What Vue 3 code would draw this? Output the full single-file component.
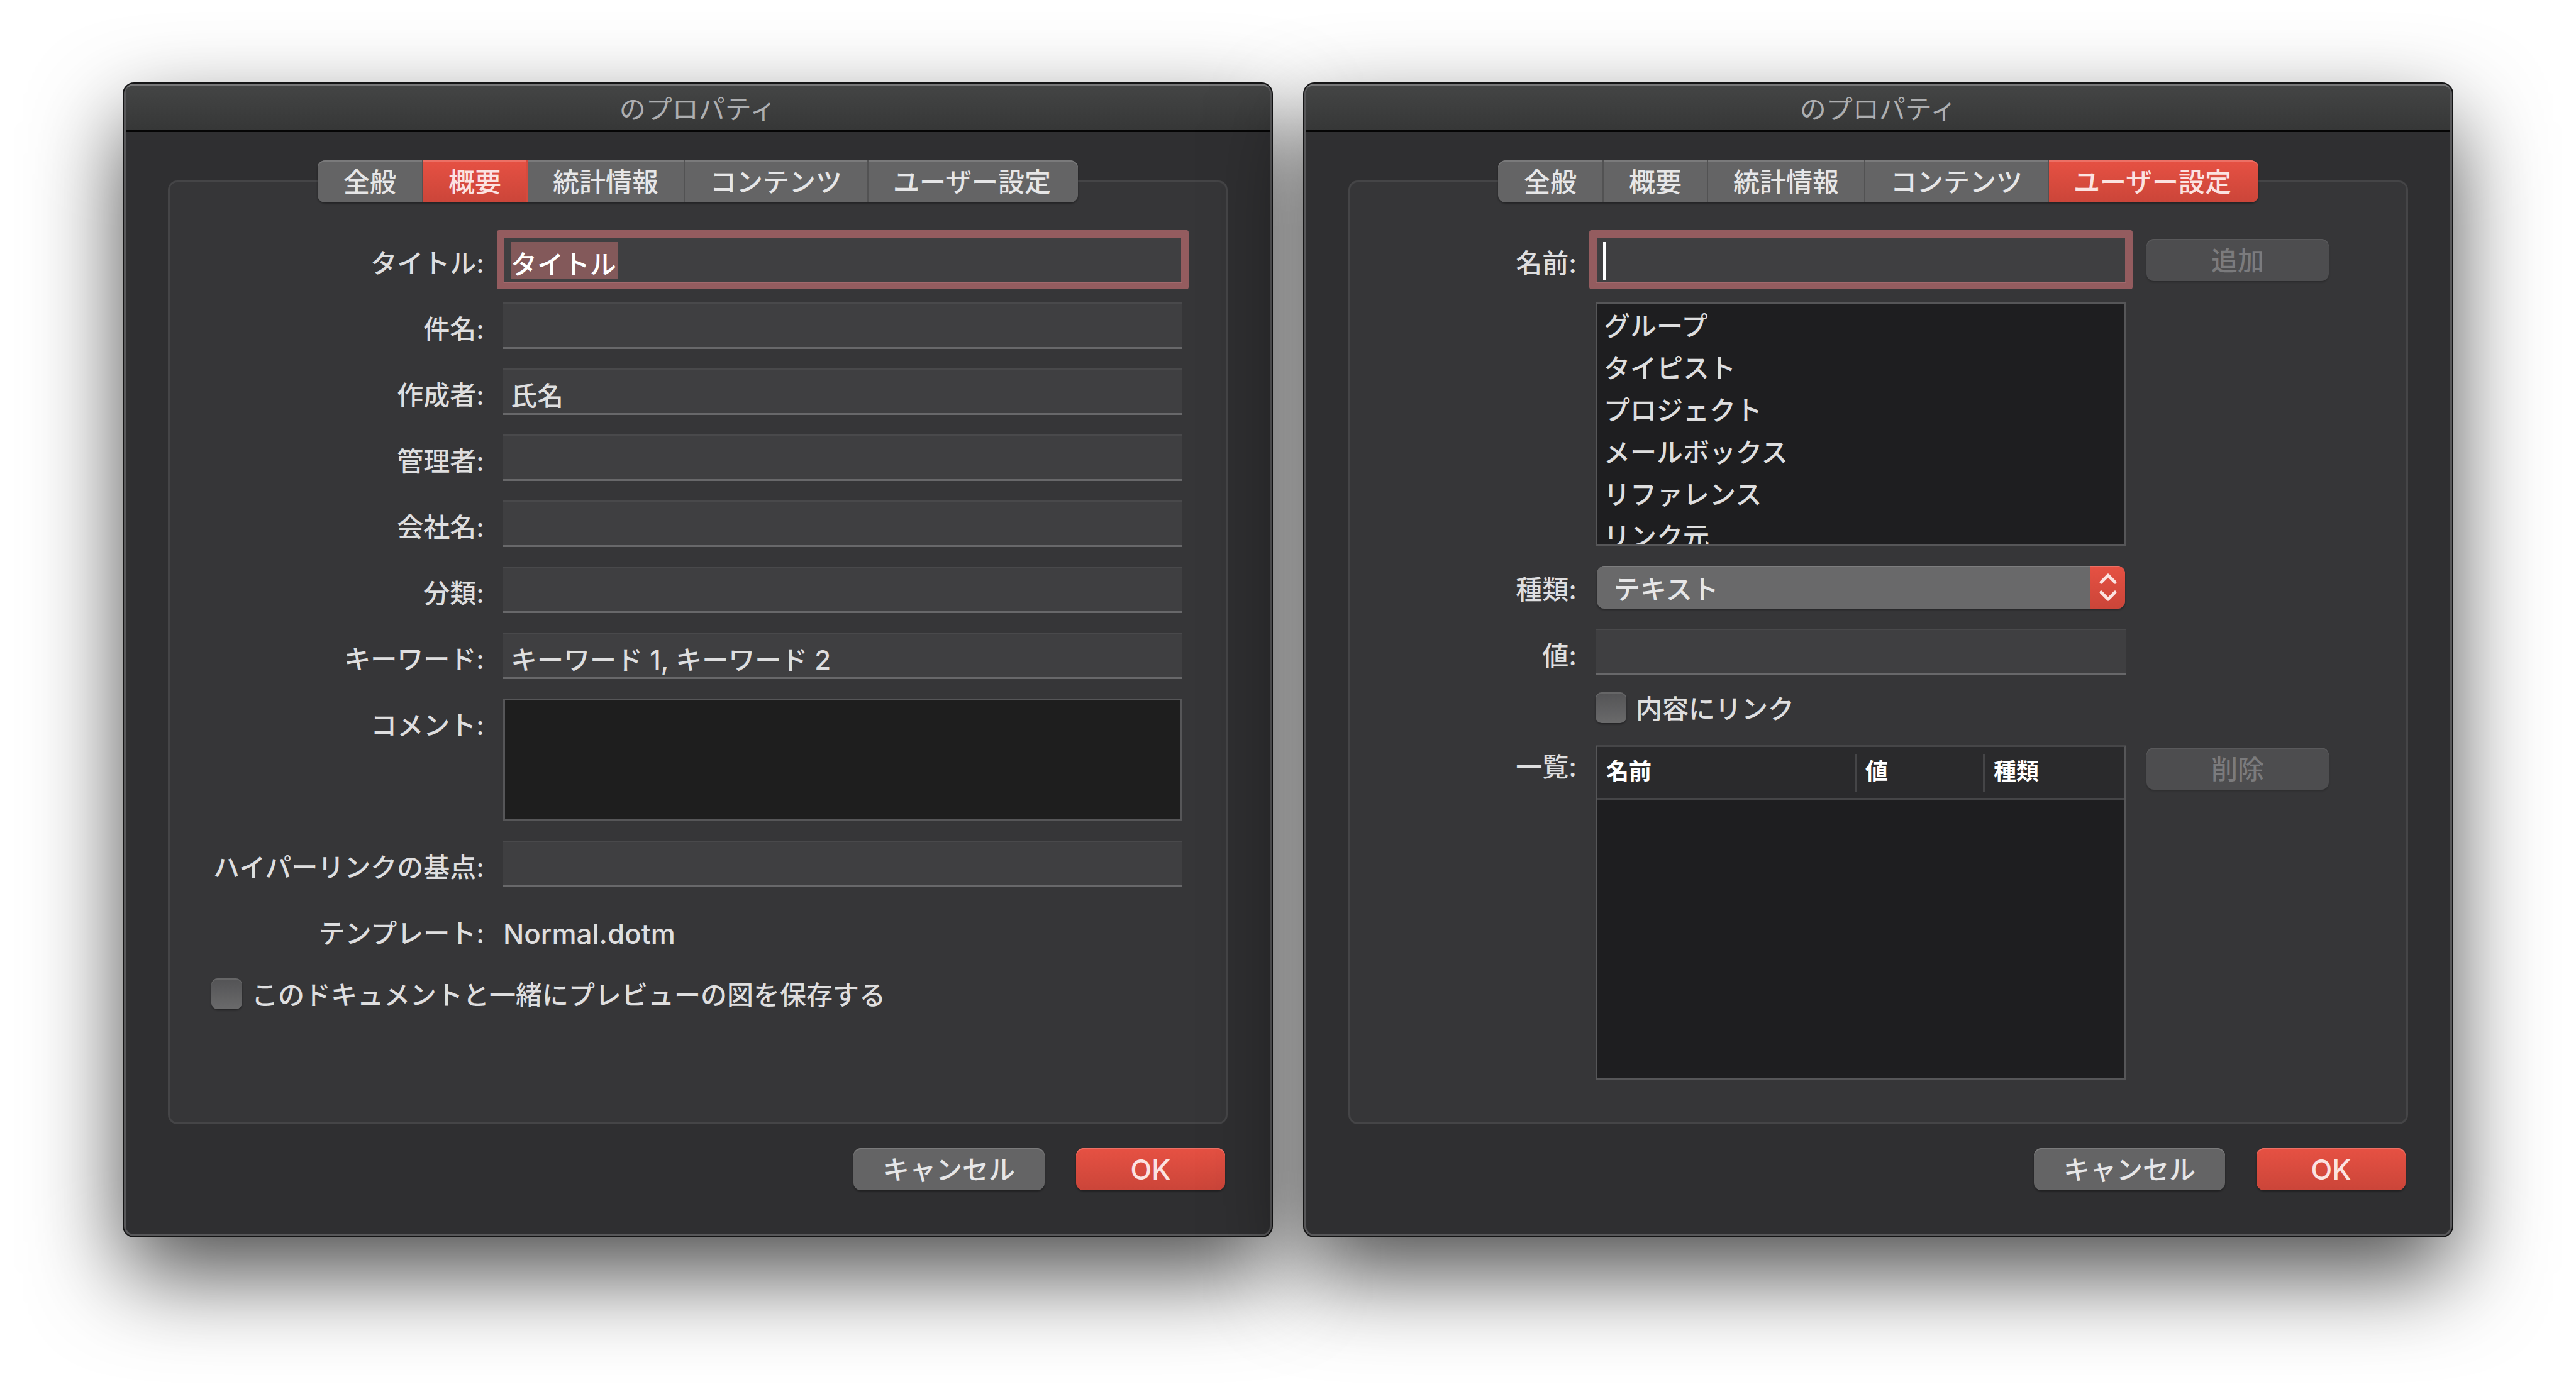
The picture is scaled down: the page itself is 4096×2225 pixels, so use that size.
<script setup>
import { ref } from 'vue'

const tabs = ['全般', '概要', '統計情報', 'コンテンツ', 'ユーザー設定']

const summary = ref([
  { id: 'title', label: 'タイトル', value: 'タイトル', focused: true },
  { id: 'subject', label: '件名', value: '' },
  { id: 'author', label: '作成者', value: '氏名' },
  { id: 'manager', label: '管理者', value: '' },
  { id: 'company', label: '会社名', value: '' },
  { id: 'category', label: '分類', value: '' },
  { id: 'keywords', label: 'キーワード', value: 'キーワード 1, キーワード 2' },
])
const comment = ref('')
const linkBase = ref('')
const savePreview = ref(false)

const names = ['グループ', 'タイピスト', 'プロジェクト', 'メールボックス', 'リファレンス', 'リンク元']
const customName = ref('')
const customType = ref('テキスト')
const customValue = ref('')
const linkToContent = ref(false)
</script>

<template>
  <main class="desktop">
    <section class="dialog" aria-labelledby="summary-heading">
      <h1 id="summary-heading" class="titlebar">のプロパティ</h1>
      <div class="body">
        <div class="tabs" role="tablist">
          <button
            v-for="tab in tabs"
            :key="tab"
            type="button"
            role="tab"
            class="tab"
            :class="{ active: tab === '概要' }"
            :aria-selected="tab === '概要'"
          >{{ tab }}</button>
        </div>
        <form class="group summary" @submit.prevent>
          <template v-for="field in summary" :key="field.id">
            <label class="label" :for="field.id">{{ field.label }}:</label>
            <input
              :id="field.id"
              v-model="field.value"
              type="text"
              class="field"
              :class="{ focused: field.focused, selected: field.focused }"
            >
          </template>
          <label class="label" for="comment">コメント:</label>
          <textarea id="comment" v-model="comment" class="comment"></textarea>
          <label class="label" for="link-base">ハイパーリンクの基点:</label>
          <input id="link-base" v-model="linkBase" type="text" class="field">
          <span class="label">テンプレート:</span>
          <span class="static">Normal.dotm</span>
          <label class="check wide">
            <input v-model="savePreview" type="checkbox" class="box">
            <span>このドキュメントと一緒にプレビューの図を保存する</span>
          </label>
        </form>
        <div class="actions">
          <button type="button" class="button cancel">キャンセル</button>
          <button type="button" class="button primary">OK</button>
        </div>
      </div>
    </section>

    <section class="dialog" aria-labelledby="custom-heading">
      <h1 id="custom-heading" class="titlebar">のプロパティ</h1>
      <div class="body">
        <div class="tabs" role="tablist">
          <button
            v-for="tab in tabs"
            :key="tab"
            type="button"
            role="tab"
            class="tab"
            :class="{ active: tab === 'ユーザー設定' }"
            :aria-selected="tab === 'ユーザー設定'"
          >{{ tab }}</button>
        </div>
        <form class="group custom" @submit.prevent>
          <label class="label" for="custom-name">名前:</label>
          <input id="custom-name" v-model="customName" type="text" class="field focused caret">
          <button type="button" class="button side" disabled>追加</button>

          <ul class="names" role="listbox" aria-label="名前">
            <li v-for="name in names" :key="name" role="option">{{ name }}</li>
          </ul>

          <label class="label snug" for="custom-type">種類:</label>
          <div class="popup">
            <select id="custom-type" v-model="customType">
              <option>テキスト</option>
            </select>
            <span class="arrows">
              <svg viewBox="0 0 56 68" fill="none" stroke="#fbe3e1" stroke-width="5" stroke-linecap="round" stroke-linejoin="round">
                <path d="M18 26 L29 15 L40 26" />
                <path d="M18 42 L29 53 L40 42" />
              </svg>
            </span>
          </div>

          <label class="label" for="custom-value">値:</label>
          <div class="stack">
            <input id="custom-value" v-model="customValue" type="text" class="field">
            <label class="check">
              <input v-model="linkToContent" type="checkbox" class="box">
              <span>内容にリンク</span>
            </label>
          </div>

          <span id="list-label" class="label top">一覧:</span>
          <div class="listing">
            <table aria-labelledby="list-label">
              <thead>
                <tr>
                  <th class="col-name">名前</th>
                  <th class="col-value">値</th>
                  <th>種類</th>
                </tr>
              </thead>
              <tbody></tbody>
            </table>
          </div>
          <button type="button" class="button side" disabled>削除</button>
        </form>
        <div class="actions">
          <button type="button" class="button cancel">キャンセル</button>
          <button type="button" class="button primary">OK</button>
        </div>
      </div>
    </section>
  </main>
</template>

<style>
body {
  margin: 0;
  background: #fff;
}
</style>

<style scoped>
* {
  box-sizing: border-box;
}

.desktop {
  display: flex;
  gap: 52px;
  min-height: 100vh;
  padding: 133px 197px 259px;
  overflow: hidden;
  background: #fff;
  color: #dededf;
  font-family: Inter, "Noto Sans CJK JP", sans-serif;
  font-size: 42px;
  font-weight: 500;
}

button,
input,
select,
textarea {
  margin: 0;
  border: 0;
  border-radius: 0;
  outline: 0;
  color: inherit;
  font: inherit;
  appearance: none;
}

.dialog {
  display: flex;
  flex: 1;
  flex-direction: column;
  border: 3px solid #58585a;
  border-top-color: #767677;
  border-radius: 16px;
  background: #2f2f31;
  box-shadow: 0 0 0 2px #141415, 0 60px 146px rgba(0, 0, 0, 0.7);
}

.titlebar {
  height: 74px;
  margin: 0;
  padding-top: 4px;
  border-bottom: 3px solid #050505;
  border-radius: 12px 12px 0 0;
  background: linear-gradient(#444545, #363737);
  color: #adaeb0;
  font-size: 42px;
  font-weight: 400;
  line-height: 68px;
  text-align: center;
}

.body {
  display: flex;
  flex: 1;
  flex-direction: column;
  padding: 45px 67px 70px;
}

.tabs {
  position: relative;
  z-index: 1;
  display: flex;
  align-self: center;
  margin-bottom: -35px;
  border-radius: 12px;
  box-shadow: 0 2px 3px rgba(0, 0, 0, 0.35);
}

.tab {
  height: 67px;
  padding: 0 40px;
  border-right: 2px solid #525253;
  background: #646465;
  box-shadow: inset 0 2px #7a7a7b;
  color: #e6e6e7;
  line-height: 69px;
}

.tab:first-child {
  padding: 0 41px;
  border-radius: 12px 0 0 12px;
}

.tab:last-child {
  padding: 0 43px 0 39px;
  border-right: 0;
  border-radius: 0 12px 12px 0;
}

.tab.active {
  border-color: #d64a3d;
  background: linear-gradient(#e65143, #cb4539);
  box-shadow: inset 0 2px #ec7065;
  color: #fbe3e1;
}

.group {
  display: grid;
  flex: 1;
  align-content: start;
  row-gap: 31px;
  border: 3px solid #454547;
  border-radius: 15px;
  background: #363638;
}

.summary {
  grid-template-columns: 432px 1fr;
  column-gap: 32px;
  padding: 86px 69px 172px 66px;
}

.custom {
  grid-template-columns: 292px 1fr 290px;
  column-gap: 32px;
  padding: 86px 123px 64px 66px;
}

.label {
  grid-column: 1;
  align-self: start;
  margin-right: -2px;
  padding-top: 12px;
  line-height: 62px;
  text-align: right;
  white-space: nowrap;
}

.label.snug {
  padding-top: 8px;
}

.label.top {
  padding-top: 4px;
}

.static {
  padding-top: 12px;
  font-size: 44px;
  line-height: 62px;
}

.field {
  display: block;
  width: 100%;
  height: 74px;
  padding: 8px 12px 0;
  border-top: 2px solid #49494b;
  border-bottom: 3px solid #68686a;
  background: #3f3f41;
}

.field.focused {
  padding: 8px 10px 0;
  border: 2px solid #945c5f;
  border-bottom-color: #a2696c;
  box-shadow: 0 0 0 10px #945c5f;
  border-radius: 1px;
  color: #fff;
}

.field.selected {
  background: linear-gradient(#83595a, #83595a) 10px 7px / 171px 59px no-repeat #3f3f41;
}

.field.caret {
  background: linear-gradient(#fff, #fff) 10px 7px / 4px 60px no-repeat #3f3f41;
}

.comment {
  display: block;
  width: 100%;
  height: 195px;
  padding: 12px;
  border: 3px solid #565658;
  background: #1e1e1e;
  resize: none;
}

.check {
  display: flex;
  align-items: center;
  gap: 15px;
  height: 58px;
}

.check span {
  padding-top: 6px;
  line-height: 50px;
  white-space: nowrap;
}

.check.wide {
  grid-column: 1 / -1;
  height: 66px;
}

.box {
  width: 49px;
  height: 49px;
  flex: none;
  border-radius: 10px;
  background: linear-gradient(#535355, #6a6a6b);
  box-shadow: inset 0 2px #666667, 0 2px 3px rgba(0, 0, 0, 0.35);
}

.names {
  grid-column: 2;
  height: 387px;
  margin: 0;
  padding: 1px 10px 0;
  overflow: hidden;
  border: 3px solid #565658;
  background: #1e1e20;
  line-height: 67px;
  list-style: none;
}

.popup {
  position: relative;
  height: 68px;
  margin: 1px 2px;
  overflow: hidden;
  border-radius: 12px;
  box-shadow: 0 2px 3px rgba(0, 0, 0, 0.35);
}

.popup select {
  display: block;
  width: 100%;
  height: 68px;
  padding: 6px 70px 0 27px;
  background: #69696a;
  box-shadow: inset 0 2px #7d7d7e;
  color: #e6e6e7;
}

.arrows {
  position: absolute;
  top: 0;
  right: 0;
  width: 56px;
  height: 68px;
  background: linear-gradient(#e65143, #cb4539);
  box-shadow: inset 0 2px #ec7065;
  pointer-events: none;
}

.arrows svg {
  display: block;
  width: 56px;
  height: 68px;
}

.stack {
  display: flex;
  flex-direction: column;
  gap: 22px;
}

.listing {
  height: 532px;
  border: 3px solid #565658;
  border-top-color: #464648;
  background: #1e1e20;
}

table {
  width: 100%;
  border-collapse: separate;
  border-spacing: 0;
  table-layout: fixed;
}

th {
  height: 84px;
  padding: 0 0 3px 17px;
  border-bottom: 3px solid #454547;
  background: linear-gradient(#454547, #454547) left center / 3px 60px no-repeat #2a2a2c;
  color: #fff;
  font-size: 36px;
  font-weight: 700;
  line-height: 60px;
  text-align: left;
}

.col-name {
  width: 409px;
  padding-left: 14px;
  background: #2a2a2c;
}

.col-value {
  width: 204px;
}

.button {
  height: 67px;
  padding: 0;
  border-radius: 12px;
  background: #646465;
  box-shadow: inset 0 2px #7a7a7b, 0 2px 3px rgba(0, 0, 0, 0.35);
  color: #e6e6e7;
  line-height: 69px;
  text-align: center;
}

.button.side {
  width: 290px;
  margin-top: 4px;
  background: #4d4d4f;
  box-shadow: inset 0 2px #59595b, 0 2px 3px rgba(0, 0, 0, 0.2);
  color: #7b7b7d;
}

.actions {
  display: flex;
  justify-content: flex-end;
  gap: 50px;
  margin-top: 38px;
  padding-right: 4px;
}

.cancel {
  width: 304px;
}

.button.primary {
  width: 237px;
  background: linear-gradient(#e65143, #cb4539);
  box-shadow: inset 0 2px #ec7065, 0 2px 3px rgba(0, 0, 0, 0.35);
  color: #fbe3e1;
  font-size: 44px;
}
</style>
